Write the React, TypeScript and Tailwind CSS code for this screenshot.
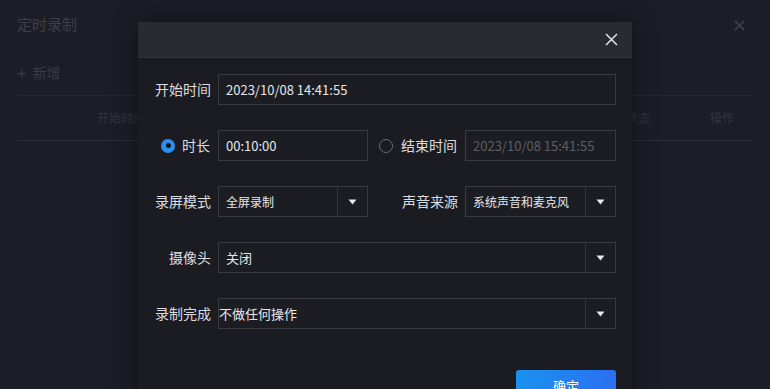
import type { ReactNode } from "react"

const font = { fontFamily: '"Noto Sans CJK SC", "Liberation Sans", sans-serif' }

function Caret() {
  return (
    <svg width="9" height="6" viewBox="0 0 9 6" aria-hidden>
      <path d="M0.5 0.5h8L4.5 5.5z" fill="#e8e8ea" />
    </svg>
  )
}

function Label({ children, className = "" }: { children: ReactNode; className?: string }) {
  return <span className={`shrink-0 text-right text-[14px] text-[#dcdde0] ${className}`}>{children}</span>
}

function Field({ children, className = "", dim = false }: { children: ReactNode; className?: string; dim?: boolean }) {
  return (
    <div
      className={`flex h-[31px] items-center border border-[#3a3b41] bg-[#1c1d22] px-[7px] text-[13px] ${
        dim ? "text-[#5c5d63]" : "text-[#e6e7ea]"
      } ${className}`}
    >
      {children}
    </div>
  )
}

function Select({ value, className = "", pad = "px-[7px]", size = "text-[12px]" }: { value: string; className?: string; pad?: string; size?: string }) {
  return (
    <div className={`flex h-[31px] items-stretch border border-[#3a3b41] bg-[#1c1d22] ${className}`}>
      <span className={`flex flex-1 items-center ${pad} ${size} text-[#e6e7ea]`}>{value}</span>
      <span className="flex w-[30px] items-center justify-center border-l border-[#333439]">
        <Caret />
      </span>
    </div>
  )
}

function Radio({ checked }: { checked?: boolean }) {
  return checked ? (
    <span className="flex h-[14px] w-[14px] items-center justify-center rounded-full bg-[#2b8ff2]">
      <span className="h-[5px] w-[5px] rounded-full bg-[#15161a]" />
    </span>
  ) : (
    <span className="h-[14px] w-[14px] rounded-full border border-[#6a6b70]" />
  )
}

export default function App() {
  return (
    <div className="relative h-[389px] w-[770px] overflow-hidden bg-[#1c1e27]" style={font}>
      {/* dimmed page behind the dialog */}
      <div className="flex flex-col px-[17px] pt-[13px]">
        <div className="flex items-center justify-between">
          <span className="text-[15px] text-[#3c3e48]">定时录制</span>
          <span className="mr-[6px] text-[18px] leading-none text-[#3c3e48]">✕</span>
        </div>
        <div className="mt-[26px] flex items-center gap-[6px] text-[14px] text-[#393b45]">
          <span className="text-[17px] leading-none">+</span>
          <span>新增</span>
        </div>
        <div className="mt-[12px] mr-[-1px] border-t border-[#262831]">
          <div className="flex h-[45px] items-center border-b border-[#2a2c35] text-[12px] text-[#33353e]">
            <span className="ml-[80px]">开始时间</span>
            <span className="ml-auto mr-[60px]">状态</span>
            <span className="mr-[20px]">操作</span>
          </div>
        </div>
      </div>

      {/* dialog */}
      <div className="absolute left-[138px] top-[22px] w-[494px] bg-[#1b1c21] shadow-[0_0_24px_rgba(0,0,0,0.45)]">
        <div className="flex h-[36px] items-center justify-end border-b border-[#323338] bg-[#2a2b30] pr-[14px]">
          <svg width="13" height="13" viewBox="0 0 13 13" aria-hidden>
            <path d="M1 1l11 11M12 1L1 12" stroke="#e4e4e6" strokeWidth="1.5" />
          </svg>
        </div>

        <div className="flex flex-col gap-[25px] pl-[17px] pr-[16px] pt-[16px] pb-[12px]">
          <div className="flex items-center gap-[7px]">
            <Label className="w-[56px]">开始时间</Label>
            <Field className="flex-1">2023/10/08 14:41:55</Field>
          </div>

          <div className="flex items-center">
            <div className="flex w-[63px] items-center gap-[7px] pl-[6px]">
              <Radio checked />
              <Label>时长</Label>
            </div>
            <Field className="w-[150px]">00:10:00</Field>
            <div className="ml-[11px] flex items-center gap-[8px]">
              <Radio />
              <Label>结束时间</Label>
            </div>
            <Field className="ml-[8px] flex-1" dim>
              2023/10/08 15:41:55
            </Field>
          </div>

          <div className="flex items-center">
            <Label className="w-[56px]">录屏模式</Label>
            <Select value="全屏录制" className="ml-[7px] w-[150px]" />
            <Label className="ml-[34px]">声音来源</Label>
            <Select value="系统声音和麦克风" className="ml-[7px] flex-1" />
          </div>

          <div className="flex items-center gap-[7px]">
            <Label className="w-[56px]">摄像头</Label>
            <Select value="关闭" className="flex-1" size="text-[13px]" />
          </div>

          <div className="flex items-center gap-[7px]">
            <Label className="w-[56px]">录制完成</Label>
            <Select value="不做任何操作" className="flex-1" pad="px-0" size="text-[13px]" />
          </div>

          <div className="flex justify-end pt-[16px]">
            <button className="h-[32px] w-[100px] rounded-[3px] bg-gradient-to-r from-[#1992ee] to-[#2a6ff2] text-[13px] text-white">
              确定
            </button>
          </div>
        </div>
      </div>
    </div>
  )
}
